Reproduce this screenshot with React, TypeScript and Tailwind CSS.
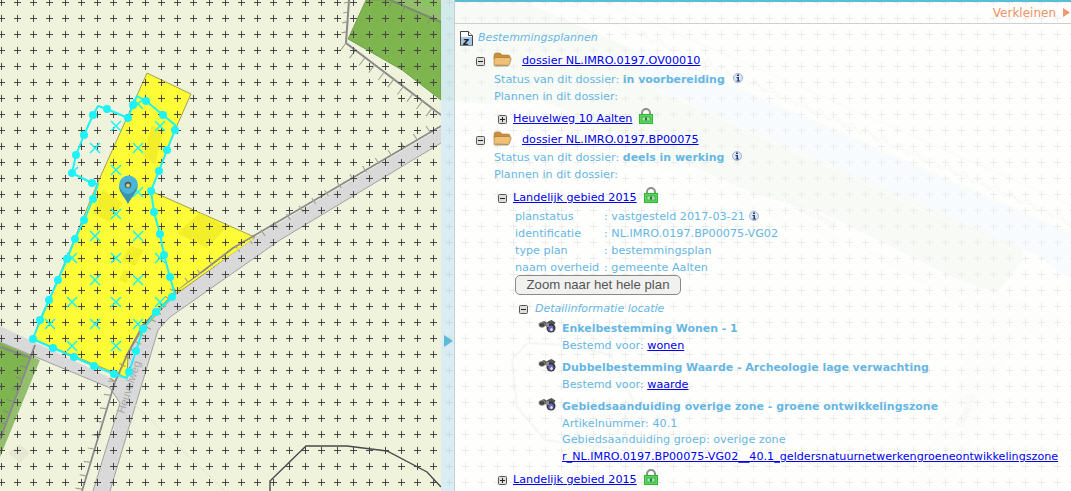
import React from "react";

type P = [number, number];

const vertices: P[] = [
  [33,339],[40,320],[49,300],[58,280],[67,259],[75,239],[84,220],[93,199],[92,183],[72,173],[76,155],[84,135],[93,115],[107,109],[128,118],[133,105],[146,101],[163,115],[175,130],[167,150],[159,171],[151,191],[154,212],[160,234],[164,255],[170,277],[172,297],[156,312],[143,329],[136,351],[129,372],[114,374],[94,366],[74,357],[53,348],
];
const outline = "33,339 40,320 49,300 58,280 67,259 75,239 84,220 93,199 98,184 92,183 72,173 76,155 84,135 93,115 98,106 107,109 128,118 133,105 137,96 146,101 163,115 175,125 175,130 167,150 159,171 151,191 154,212 160,234 164,255 170,277 175,295 172,297 156,312 143,329 136,351 129,372 127,378 114,374 94,366 74,357 53,348";
const crosses: P[] = [
  [138,104],[116,126],[160,126],[95,148],[138,148],[116,170],[138,192],[116,214],[95,236],[138,236],
  [72,258],[116,258],[160,258],[95,280],[138,280],[72,302],[116,302],[160,302],[50,324],[95,324],[138,324],[72,346],[116,346],
];

function ticks(a: P, b: P, step: number, dx: number, dy: number) {
  const len = Math.hypot(b[0] - a[0], b[1] - a[1]);
  const n = Math.floor(len / step);
  let d = "";
  for (let i = 0; i <= n; i++) {
    const t = (i * step) / len;
    const x = a[0] + (b[0] - a[0]) * t;
    const y = a[1] + (b[1] - a[1]) * t;
    d += `M${x.toFixed(1)} ${y.toFixed(1)}l${dx} ${dy}`;
  }
  return d;
}

function wave(x0: number, y0: number, x1: number) {
  let d = `M${x0} ${y0}`;
  const slope = 0.437;
  for (let x = x0; x < x1; x += 8) {
    const k = Math.floor((x - x0) / 8) % 2 === 0 ? -7 : 7;
    d += `Q${x + 4} ${(y0 + (x + 4 - x0) * slope + k).toFixed(1)} ${x + 8} ${(y0 + (x + 8 - x0) * slope).toFixed(1)}`;
  }
  return d;
}

function MapCanvas() {
  return (
    <svg className="absolute inset-0" width="1071" height="491" viewBox="0 0 1071 491">
      <defs>
        <pattern id="plus" x="-6" y="-5" width="16" height="16" patternUnits="userSpaceOnUse">
          <path d="M4 7.500h7M7.500 4v7" stroke="#454545" strokeWidth="1" fill="none" />
        </pattern>
      </defs>
      <rect width="1071" height="491" fill="#f0f3dc" />

      {/* far side of the map, seen through the panel */}
      <polygon points="366,0 560,0 1023,232 1023,260 993,297 823,213 667,170 560,110 441,100 402,70 348,39" fill="#b4d49a" />
      <polygon points="583,0 1071,213 1071,240 520,0" fill="#f0f3dc" />
      <polygon points="640,46 1071,233 1071,280 1037,255 640,82" fill="#b9d7f4" />
      <path d={wave(640, 34, 1071)} stroke="#999" strokeWidth="1" fill="none" />
      <path d="M600 0L1071 205M560 0L1071 223M640 46L1071 233M640 82L1023 255" stroke="#c6e4b0" strokeWidth="2" fill="none" />
      <polygon points="441,128 520,90 780,205 983,317 913,491 950,491 1020,330 1071,345 1071,320 990,290 780,222 540,112 441,143" fill="#e6e6e2" />
      <polygon points="512,360 527,343 567,345 610,355 633,400 610,448 545,440 517,407" fill="none" stroke="#a0a0a0" strokeWidth="2" />
      <text x="0" y="0" fontSize="11" fill="#999" fontFamily="'Liberation Sans', sans-serif" transform="translate(785 204) rotate(26)">Heuvelweg</text>
      <text x="0" y="0" fontSize="11" fill="#999" fontFamily="'Liberation Sans', sans-serif" transform="translate(963 428) rotate(-68)">Staldijk</text>

      {/* green plots */}
      <polygon points="348,39 366,0 441,0 441,100 402,70" fill="#7eb54f" stroke="#5e8a42" strokeWidth="0.6" />
      <polygon points="390,0 441,0 441,22" fill="#93bf6c" />
      <path d="M423,0L441,9" stroke="#5fdc3c" strokeWidth="1.2" fill="none" />
      <polygon points="0,342 40,360 0,457" fill="#93bf6c" />
      <polygon points="0,343 30,355 0,440" fill="#7eb54f" />
      <polygon points="8,453 20,444 30,453 20,463" fill="#e6e8d2" />

      {/* roads */}
      <polygon points="441,128 233,250 175,295 143,329 128,353 115,380 0,326 0,342 110,388 120,403 93,491 110,491 158,330 170,317 280,240 441,143" fill="#d9d9d9" />
      <path d="M441,143L280,240L170,317L158,330L110,491M0,342L110,388L120,403L93,491" stroke="#8f8f8f" strokeWidth="0.8" fill="none" />

      {/* yellow plan area */}
      <polygon points="147,73 191,94 175,130 151,191 250,235 255,237 175,295 143,329 128,353 127,378 33,339 98,182" fill="#fefc37" stroke="#7d7a3a" strokeWidth="0.7" />
      <polygon points="152,125 163,131 155,165 143,156" fill="#f2ee2a" />
      <polygon points="103,190 123,203 110,222 92,213" fill="#f2ee2a" />
      <polygon points="200,213 227,227 207,248 177,233" fill="#f2ee2a" />
      <polygon points="130,246 144,250 135,266 122,260" fill="#f2ee2a" />
      <polygon points="124,270 132,272 126,283 119,280" fill="#f2ee2a" />

      {/* hatched borders */}
      <path d="M349,0L346,43L441,115" stroke="#8a8a8a" strokeWidth="2" fill="none" />
      <path d={ticks([349,2],[346,40],10,-5,1)} stroke="#9b9b8e" strokeWidth="1.200" fill="none" />
      <path d={ticks([346,43],[441,115],12,-6,8)} stroke="#a5a597" strokeWidth="1.200" fill="none" />
      <path d="M390,0L441,22" stroke="#7c8c6e" strokeWidth="2" fill="none" />
      <path d={ticks([392,1],[441,22],14,-3,7)} stroke="#7f9b62" strokeWidth="1.200" fill="none" />
      <path d="M441,126L233,248L176,292L143,325L128,353L115,382L82,491" stroke="#8a8a8a" strokeWidth="1.800" fill="none" />
      <path d={ticks([430,132],[176,292],15,-4,-6)} stroke="#a5a597" strokeWidth="1.200" fill="none" />
      <path d={ticks([176,292],[115,382],9,-6,-3)} stroke="#a59f60" strokeWidth="1.200" fill="none" />
      <path d={ticks([115,382],[82,491],14,-7,-1)} stroke="#a5a597" strokeWidth="1.200" fill="none" />
      <path d="M252,239L176,292" stroke="#fefc37" strokeWidth="1.500" fill="none" />
      <path d="M35,345L0,440" stroke="#8a8a8a" strokeWidth="2" fill="none" />
      <path d="M0,347L31,358" stroke="#8a8a8a" strokeWidth="2" fill="none" />
      <path d={ticks([0,435],[30,358],12,-6,-2)} stroke="#8a8a8a" strokeWidth="1.200" fill="none" />

      <path d="M135,405L225,491" stroke="#dfe2cc" strokeWidth="1" fill="none" />
      <polyline points="270,491 270,481 306,446 347,446 387,451 427,472 441,487" fill="none" stroke="#4a4a4a" strokeWidth="1.400" />
      <text x="0" y="0" fontSize="11" fill="#a8a8a8" fontFamily="'Liberation Sans', sans-serif" transform="translate(124 414) rotate(-72)">Heuvelweg</text>

      <rect width="1071" height="491" fill="url(#plus)" />

      {/* cyan selection */}
      <polygon points={outline} fill="none" stroke="#1ef2f7" strokeWidth="2" strokeLinejoin="round" />
      {crosses.map(([x, y]) => (
        <path key={`${x}-${y}`} d={`M${x - 5} ${y - 5}l10 10M${x + 5} ${y - 5}l-10 10`} stroke="#1ef2f7" strokeWidth="1.500" fill="none" />
      ))}
      <path d="M72 173l6 -6" stroke="#1ef2f7" strokeWidth="1.500" fill="none" />
      {vertices.map(([x, y]) => (
        <circle key={`${x}_${y}`} cx={x} cy={y} r="4" fill="#1ef2f7" />
      ))}

      {/* marker pin */}
      <path d="M128 204c-2-6-9-11-9-19a9.500 9.500 0 0 1 19 0c0 8-8 13-10 19z" fill="#4bb5d8" />
      <path d="M128 204c-2-6-9-11-9-18c3 6 6 8 9 8c3 0 6-2 9-8c0 7-7 12-9 18z" fill="#3a93ad" />
      <circle cx="128" cy="185" r="3.200" fill="#3f5a52" />
      <circle cx="128" cy="185.500" r="2" fill="#d9c98a" />
    </svg>
  );
}

function Box({ open }: { open?: boolean }) {
  return (
    <svg width="9" height="9" viewBox="0 0 9 9" className="shrink-0">
      <rect x="0.500" y="0.500" width="8" height="8" rx="1" fill="#dededa" stroke="#555" />
      <path d={open ? "M2 4.500h5" : "M2 4.500h5M4.500 2v5"} stroke="#222" strokeWidth="1" />
    </svg>
  );
}

function Folder() {
  return (
    <svg width="19" height="15" viewBox="0 0 19 15" className="shrink-0">
      <path d="M1 3.500Q1 1 3 1h4l2 2h6q2 0 2 2v2H1z" fill="#c98f3e" stroke="#a87830" strokeWidth="0.600" />
      <path d="M1.200 13.500L1 7q0-1.500 2-1.500h13q2.500 0 2 2l-2 5.500q-.4 1-1.500 1H3q-1.500 0-1.800-.5z" fill="#f0c077" stroke="#a9782f" strokeWidth="0.700" />
      <path d="M2.500 13l12.500 .4" stroke="#8a8a80" strokeWidth="0.800" />
    </svg>
  );
}

function Lock() {
  return (
    <svg width="14" height="16" viewBox="0 0 14 16" className="shrink-0">
      <path d="M3 7V5a4 4 0 0 1 8 0v2" fill="none" stroke="#8b9189" strokeWidth="2" />
      <rect x="0.500" y="6.500" width="13" height="9" fill="#5fd35f" stroke="#2eb82e" />
      <rect x="3" y="9" width="8" height="4" fill="#a3e4a3" stroke="#1f9a3a" strokeWidth="0.600" />
      <rect x="6" y="9.500" width="2" height="3" fill="#1f7a3a" />
    </svg>
  );
}

function Info() {
  return (
    <svg width="10" height="11" viewBox="0 0 10 11" className="shrink-0">
      <circle cx="5" cy="5" r="4.500" fill="#dfe6f3" stroke="#8ea4c8" strokeWidth="0.800" />
      <rect x="4" y="1.500" width="2" height="1.500" fill="#24407a" />
      <path d="M3.500 4h2.500v3.500h1v1h-3.500v-1h1v-2.500h-1z" fill="#24407a" />
    </svg>
  );
}

function Binoculars() {
  return (
    <svg width="19" height="13" viewBox="0 0 19 13" className="shrink-0">
      <path d="M0.500 3.500L6 1l2.500 1.500 2.500-1.500 2.500-1 4 2.500-1 2-4 1-2-1-3 1.500-3 .5z" fill="#555" />
      <ellipse cx="4" cy="5" rx="3.200" ry="2.400" fill="#444" stroke="#b5b5b5" strokeWidth="0.600" />
      <ellipse cx="13" cy="8" rx="4.500" ry="4.500" fill="#383838" />
      <ellipse cx="13" cy="8.500" rx="2.600" ry="3" fill="#6a6ac8" />
      <ellipse cx="13.500" cy="9.500" rx="1.200" ry="1.500" fill="#e6e6ff" />
      <rect x="8" y="3" width="3" height="4" fill="#8a8a8a" />
    </svg>
  );
}

function DocIcon() {
  return (
    <svg width="13" height="15" viewBox="0 0 13 15" className="shrink-0">
      <path d="M0.500 0.500h8l4 4v10h-12z" fill="#fff" stroke="#444" />
      <path d="M8.500 0.500v4h4" fill="#fff" stroke="#444" />
      <rect x="1" y="6" width="11" height="8.500" fill="#a8c6e6" />
      <text x="3" y="13.500" fontSize="10" fontWeight="700" fontFamily="'DejaVu Sans', sans-serif" fill="#222">z</text>
    </svg>
  );
}

const linkCls = "text-[#0000ee] underline";

function Line({ className = "", children }: { className?: string; children: React.ReactNode }) {
  return <div className={`flex h-[17px] items-center whitespace-pre ${className}`}>{children}</div>;
}

function Prop({ k, v, extra }: { k: string; v: string; extra?: React.ReactNode }) {
  return (
    <Line className="pl-[60px]">
      <span className="w-[89px] shrink-0">{k}</span>
      <span>: {v}</span>
      {extra}
    </Line>
  );
}

function PlanRow({ title, open, lockGap }: { title: string; open?: boolean; lockGap: string }) {
  return (
    <div className="flex h-[17px] items-center pl-[43px] whitespace-pre">
      <Box open={open} />
      <a className={`${linkCls} ml-[6px]`}>{title}</a>
      <span className={`${lockGap} -mt-[8px]`}><Lock /></span>
    </div>
  );
}

function DossierRow({ name, status, gap }: { name: string; status: string; gap: string }) {
  return (
    <>
      <div className="flex h-[17px] items-center pl-[21px]">
        <Box open />
        <span className="ml-[8px] -mt-[5px]"><Folder /></span>
        <a className={`${linkCls} ml-[10px] whitespace-pre`}>{name}</a>
      </div>
      <Line className={`${gap} pl-[39px]`}>
        <span>Status van dit dossier: </span>
        <b className="text-[10.95px]">{status}</b>
        <span className="ml-[8px] -mt-[4px]"><Info /></span>
      </Line>
      <Line className="pl-[39px]">Plannen in dit dossier:</Line>
    </>
  );
}

function DetailHead({ title }: { title: string }) {
  return (
    <div className="flex h-[17px] items-center pl-[83px] whitespace-pre">
      <span className="-mt-[6px]"><Binoculars /></span>
      <b className="ml-[5px] text-[10.95px]">{title}</b>
    </div>
  );
}

export default function App() {
  return (
    <div className="relative w-[1071px] h-[491px] overflow-hidden font-['DejaVu_Sans',Verdana,sans-serif] text-[11.2px] text-[#66b6e3]">
      <MapCanvas />
      <div className="relative flex h-full">
        <div className="w-[441px] shrink-0" />
        <div className="relative w-[14px] shrink-0 bg-[#d6ecf4]/90 border-r border-[#c8cfcf] flex items-center">
          <svg width="9" height="12" viewBox="0 0 9 12" className="absolute left-[3px] top-[335px]">
            <path d="M0 0l9 6-9 6z" fill="#5cbad8" />
          </svg>
        </div>
        <div className="flex-1 min-w-0 bg-white/90 border-t-2 border-[#5bbcd8] overflow-hidden">
          <div className="flex h-[22px] items-center justify-end gap-[7px] border-b border-[#cfcfcf] pr-[1px] text-[#ee9163] text-[12px]">
            <span>Verkleinen</span>
            <svg width="7" height="9" viewBox="0 0 7 9"><path d="M0 0l7 4.500-7 4.500z" fill="#f09a6c" /></svg>
          </div>
          <div className="flex h-[17px] mt-[6px] items-center pl-[5px] italic text-[11px]">
            <DocIcon />
            <span className="ml-[5px]">Bestemmingsplannen</span>
          </div>
          <div className="mt-[6px]">
            <DossierRow name="dossier NL.IMRO.0197.OV00010" status="in voorbereiding" gap="mt-[2px]" />
          </div>
          <div className="mt-[5px]">
            <PlanRow title="Heuvelweg 10 Aalten" lockGap="ml-[7px]" />
          </div>
          <div className="mt-[4px]">
            <DossierRow name="dossier NL.IMRO.0197.BP00075" status="deels in werking" gap="mt-[1px]" />
          </div>
          <div className="mt-[6px]">
            <PlanRow title="Landelijk gebied 2015" open lockGap="ml-[7px]" />
          </div>
          <div className="mt-[2px]">
            <Prop k="planstatus" v="vastgesteld 2017-03-21" extra={<span className="ml-[4px] -mt-[3px]"><Info /></span>} />
            <Prop k="identificatie" v="NL.IMRO.0197.BP00075-VG02" />
            <Prop k="type plan" v="bestemmingsplan" />
            <Prop k="naam overheid" v="gemeente Aalten" />
          </div>
          <div className="-mt-[2px] pl-[60px]">
            <button className="flex h-[20px] w-[166px] items-center justify-center rounded-[5px] border border-[#8a8a8a] bg-[#f1f1ef] font-['Liberation_Sans',Arial,sans-serif] text-[13.2px] text-[#555]">
              Zoom naar het hele plan
            </button>
          </div>
          <div className="mt-[6px] flex h-[17px] items-center pl-[64px] italic text-[11px]">
            <Box open />
            <span className="ml-[7px] whitespace-pre">Detailinformatie locatie</span>
          </div>
          <div className="mt-[3px]">
            <DetailHead title="Enkelbestemming Wonen - 1" />
          </div>
          <Line className="pl-[107px]">
            <span>Bestemd voor: </span><a className={linkCls}>wonen</a>
          </Line>
          <div className="mt-[5px]">
            <DetailHead title="Dubbelbestemming Waarde - Archeologie lage verwachting" />
          </div>
          <Line className="pl-[107px]">
            <span>Bestemd voor: </span><a className={linkCls}>waarde</a>
          </Line>
          <div className="mt-[5px]">
            <DetailHead title="Gebiedsaanduiding overige zone - groene ontwikkelingszone" />
          </div>
          <Line className="pl-[107px]">Artikelnummer: 40.1</Line>
          <Line className="-mt-[1px] pl-[107px]">Gebiedsaanduiding groep: overige zone</Line>
          <Line className="pl-[107px]">
            <a className={`${linkCls} text-[11.15px]`}>r_NL.IMRO.0197.BP00075-VG02__40.1_geldersnatuurnetwerkengroeneontwikkelingszone</a>
          </Line>
          <div className="mt-[6px]">
            <PlanRow title="Landelijk gebied 2015" lockGap="ml-[7px]" />
          </div>
        </div>
      </div>
    </div>
  );
}
